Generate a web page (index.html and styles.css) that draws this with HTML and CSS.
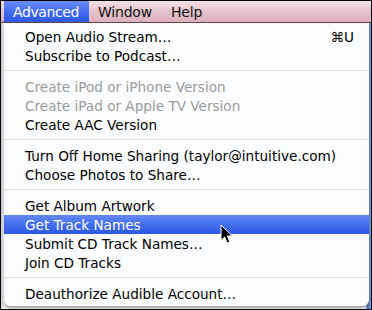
FILE: index.html
```html
<!DOCTYPE html>
<html>
<head>
<meta charset="utf-8">
<link rel="stylesheet" href="styles.css">
</head>
<body>
<div class="screen">
  <div class="menubar">
    <span class="mb-item active">Advanced</span>
    <span class="mb-item">Window</span>
    <span class="mb-item">Help</span>
  </div>
  <div class="stage">
    <div class="menu">
      <div class="item"><span>Open Audio Stream…</span><span class="key">⌘U</span></div>
      <div class="item"><span>Subscribe to Podcast…</span></div>
      <div class="sep"></div>
      <div class="item disabled"><span>Create iPod or iPhone Version</span></div>
      <div class="item disabled"><span>Create iPad or Apple TV Version</span></div>
      <div class="item"><span>Create AAC Version</span></div>
      <div class="sep"></div>
      <div class="item"><span>Turn Off Home Sharing (taylor@intuitive.com)</span></div>
      <div class="item"><span>Choose Photos to Share…</span></div>
      <div class="sep"></div>
      <div class="item"><span>Get Album Artwork</span></div>
      <div class="item selected"><span>Get Track Names</span></div>
      <div class="item"><span>Submit CD Track Names…</span></div>
      <div class="item"><span>Join CD Tracks</span></div>
      <div class="sep"></div>
      <div class="item"><span>Deauthorize Audible Account…</span></div>
    </div>
    <svg class="cursor" width="14" height="22" viewBox="0 0 14 22">
      <path d="M1 1 L1 16.5 L4.6 13 L7.2 19 L9.8 17.9 L7.3 12 L12.3 12 Z" fill="#000" stroke="#fff" stroke-width="1" stroke-linejoin="round"/>
    </svg>
  </div>
</div>
</body>
</html>
```
FILE: styles.css
```css
html, body {
  margin: 0;
  padding: 0;
  background: #000;
}
.screen {
  width: 372px;
  height: 310px;
  box-sizing: border-box;
  border: 1px solid #000;
  background: linear-gradient(90deg, #d8dce2 0%, #eef1f5 40%, #dfe8f2 100%);
  display: flex;
  flex-direction: column;
  font-family: "DejaVu Sans", "Liberation Sans", sans-serif;
  overflow: hidden;
}
.menubar {
  height: 21px;
  flex: none;
  display: flex;
  align-items: stretch;
  padding-left: 3px;
  background: linear-gradient(180deg, #f3e2e6 0%, #e6c3cc 50%, #dcb0bd 100%);
  border-bottom: 1px solid #6a4048;
}
.mb-item {
  display: flex;
  align-items: center;
  padding: 0 10px 0 9px;
  font-size: 14px;
  color: #111;
  letter-spacing: -0.2px;
}
.mb-item.active {
  color: #fff;
  letter-spacing: -0.4px;
  background: linear-gradient(180deg, #6a8ef6 0%, #3f6af0 55%, #2c58ea 100%);
}
.stage {
  position: relative;
  flex: 1;
  padding-left: 3px;
  background: linear-gradient(90deg, #c9ccd2 0px, #f2f3f5 3px, #f2f3f5 365px, #3a6fc0 366px, #7fa4d8 370px);
}
.menu {
  width: 365px;
  background: #fbfcfe;
  border-radius: 0 0 6px 6px;
  padding: 4px 0 3px;
  box-shadow: 0 2px 3px rgba(0,0,0,0.35);
}
.item {
  height: 19px;
  display: flex;
  align-items: center;
  justify-content: space-between;
  padding: 0 15px 0 21px;
  font-size: 13.6px;
  color: #000;
  white-space: nowrap;
}
.item.disabled {
  color: #9b9b9b;
}
.item.selected {
  color: #fff;
  background: linear-gradient(180deg, #6488f4 0%, #4470ef 50%, #2b57e6 100%);
}
.key {
  font-size: 13.6px;
}
.sep {
  height: 1px;
  margin: 5px 0 6px;
  background: #dedede;
}
.cursor {
  position: absolute;
  left: 219px;
  top: 201px;
}
```
